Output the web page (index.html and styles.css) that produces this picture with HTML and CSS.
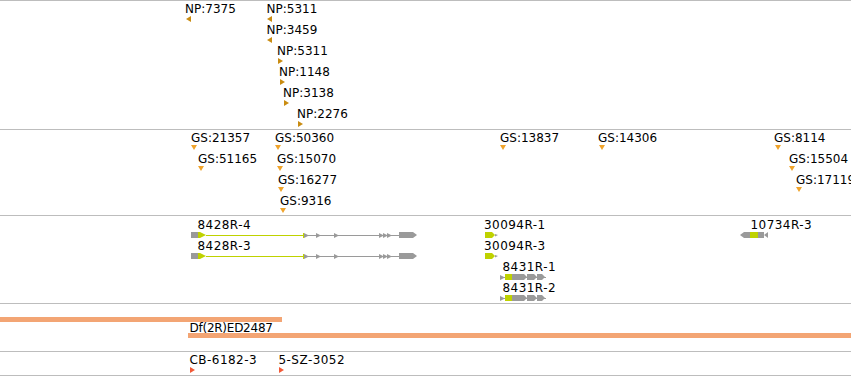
FILE: index.html
```html
<!DOCTYPE html>
<html lang="en">
<head>
  <meta charset="UTF-8">
  <title>Region tracks</title>
  <link rel="stylesheet" href="styles.css">
</head>
<body>
  <div class="tracks">

    <!-- NP peptide hits -->
    <div class="track t-np">
      <span class="lbl" style="left:185px;top:1px">NP:7375</span>
      <i class="tri np-l" style="left:186px;top:15px"></i>
      <span class="lbl" style="left:266.5px;top:1px">NP:5311</span>
      <i class="tri np-l" style="left:267px;top:15px"></i>
      <span class="lbl" style="left:266.5px;top:22px">NP:3459</span>
      <i class="tri np-l" style="left:267px;top:36px"></i>
      <span class="lbl" style="left:277px;top:43px">NP:5311</span>
      <i class="tri np-r" style="left:278px;top:57px"></i>
      <span class="lbl" style="left:279px;top:64px">NP:1148</span>
      <i class="tri np-r" style="left:280px;top:78px"></i>
      <span class="lbl" style="left:283px;top:85px">NP:3138</span>
      <i class="tri np-r" style="left:284px;top:99px"></i>
      <span class="lbl" style="left:297px;top:106px">NP:2276</span>
      <i class="tri np-r" style="left:298px;top:120px"></i>
    </div>

    <!-- GS insertions -->
    <div class="track t-gs">
      <span class="lbl" style="left:191px;top:1px">GS:21357</span>
      <i class="tri gs-d" style="left:191px;top:15px"></i>
      <span class="lbl" style="left:198px;top:22px">GS:51165</span>
      <i class="tri gs-d" style="left:198px;top:36px"></i>
      <span class="lbl" style="left:275px;top:1px">GS:50360</span>
      <i class="tri gs-d" style="left:275px;top:15px"></i>
      <span class="lbl" style="left:277px;top:22px">GS:15070</span>
      <i class="tri gs-d" style="left:277px;top:36px"></i>
      <span class="lbl" style="left:278px;top:43px">GS:16277</span>
      <i class="tri gs-d" style="left:278px;top:57px"></i>
      <span class="lbl" style="left:280px;top:64px">GS:9316</span>
      <i class="tri gs-d" style="left:280px;top:78px"></i>
      <span class="lbl" style="left:500px;top:1px">GS:13837</span>
      <i class="tri gs-d" style="left:500px;top:15px"></i>
      <span class="lbl" style="left:598px;top:1px">GS:14306</span>
      <i class="tri gs-d" style="left:599px;top:15px"></i>
      <span class="lbl" style="left:774px;top:1px">GS:8114</span>
      <i class="tri gs-d" style="left:775px;top:15px"></i>
      <span class="lbl" style="left:789px;top:22px">GS:15504</span>
      <i class="tri gs-d" style="left:789px;top:36px"></i>
      <span class="lbl" style="left:796px;top:43px">GS:17119</span>
      <i class="tri gs-d" style="left:796px;top:57px"></i>
    </div>

    <!-- transcripts -->
    <div class="track t-gene">
      <span class="lbl" style="left:197.5px;top:2px">8428R-4</span>
      <svg class="glyph" style="left:191px;top:16px" width="227" height="6" viewBox="0 0 227 6">
        <rect class="utr" x="0" y="0" width="7" height="6"/>
        <polygon class="cds" points="7,0 9,0 15,3 9,6 7,6"/>
        <rect class="cds" x="15" y="3" width="97" height="1"/>
        <rect class="cds" x="112" y="1" width="1" height="5"/>
        <rect class="utr" x="113" y="3" width="95" height="1"/>
        <polygon class="utr" points="113,1 118,3.5 113,6"/>
        <polygon class="utr" points="125,1 130,3.5 125,6"/>
        <polygon class="utr" points="143,1 148,3.5 143,6"/>
        <polygon class="utr" points="188,1 193,3.5 188,6"/>
        <polygon class="utr" points="192,1 197,3.5 192,6"/>
        <polygon class="utr" points="196,1 201,3.5 196,6"/>
        <polygon class="utr" points="208,0 222,0 226,3 222,6 208,6"/>
      </svg>
      <span class="lbl" style="left:197.5px;top:23px">8428R-3</span>
      <svg class="glyph" style="left:191px;top:37px" width="227" height="6" viewBox="0 0 227 6">
        <rect class="utr" x="0" y="0" width="7" height="6"/>
        <polygon class="cds" points="7,0 9,0 15,3 9,6 7,6"/>
        <rect class="cds" x="15" y="3" width="97" height="1"/>
        <rect class="cds" x="112" y="1" width="1" height="5"/>
        <rect class="utr" x="113" y="3" width="95" height="1"/>
        <polygon class="utr" points="113,1 118,3.5 113,6"/>
        <polygon class="utr" points="125,1 130,3.5 125,6"/>
        <polygon class="utr" points="143,1 148,3.5 143,6"/>
        <polygon class="utr" points="188,1 193,3.5 188,6"/>
        <polygon class="utr" points="192,1 197,3.5 192,6"/>
        <polygon class="utr" points="196,1 201,3.5 196,6"/>
        <polygon class="utr" points="208,0 222,0 226,3 222,6 208,6"/>
      </svg>

      <span class="lbl" style="left:484px;top:2px">30094R-1</span>
      <svg class="glyph" style="left:485px;top:16px" width="14" height="6" viewBox="0 0 14 6">
        <polygon class="cds" points="0,0 7,0 10,3 7,6 0,6"/>
        <polygon class="utr" points="10,2 13,3 10,4.5"/>
      </svg>
      <span class="lbl" style="left:484px;top:23px">30094R-3</span>
      <svg class="glyph" style="left:485px;top:37px" width="14" height="6" viewBox="0 0 14 6">
        <polygon class="cds" points="0,0 7,0 10,3 7,6 0,6"/>
        <polygon class="utr" points="10,2 13,3 10,4.5"/>
      </svg>

      <span class="lbl" style="left:502.5px;top:44px">8431R-1</span>
      <svg class="glyph" style="left:500px;top:58px" width="46" height="6" viewBox="0 0 46 6">
        <rect class="utr" x="0" y="3" width="46" height="1"/>
        <polygon class="utr" points="0,1 5,3.5 0,6"/>
        <rect class="cds" x="5" y="0" width="7" height="6"/>
        <polygon class="utr" points="12,0 24,0 27,3 24,6 12,6"/>
        <polygon class="utr" points="27,0 34,0 37,3 34,6 27,6"/>
        <polygon class="utr" points="37,0 42,0 45,3 42,6 37,6"/>
      </svg>
      <span class="lbl" style="left:502.5px;top:65px">8431R-2</span>
      <svg class="glyph" style="left:500px;top:79px" width="46" height="6" viewBox="0 0 46 6">
        <rect class="utr" x="0" y="3" width="46" height="1"/>
        <polygon class="utr" points="0,1 5,3.5 0,6"/>
        <rect class="cds" x="5" y="0" width="7" height="6"/>
        <polygon class="utr" points="12,0 24,0 27,3 24,6 12,6"/>
        <polygon class="utr" points="27,0 34,0 37,3 34,6 27,6"/>
        <polygon class="utr" points="37,0 42,0 45,3 42,6 37,6"/>
      </svg>

      <span class="lbl" style="left:750.5px;top:2px">10734R-3</span>
      <svg class="glyph" style="left:740px;top:16px" width="28" height="6" viewBox="0 0 28 6">
        <polygon class="utr" points="0,3 4,0 10,0 10,6 4,6"/>
        <rect class="cds" x="10" y="0" width="8" height="6"/>
        <rect class="utr" x="18" y="0" width="6" height="6"/>
        <polygon class="utr" points="24,3 28,0 28,6"/>
      </svg>
    </div>

    <!-- deficiencies -->
    <div class="track t-df">
      <div class="bar" style="left:0;width:282px;top:13px"></div>
      <span class="lbl" style="left:189.5px;top:17px">Df(2R)ED2487</span>
      <div class="bar" style="left:188px;width:663px;top:29px"></div>
    </div>

    <!-- markers -->
    <div class="track t-mk">
      <span class="lbl" style="left:189.5px;top:1px">CB-6182-3</span>
      <i class="tri mk-r" style="left:190px;top:15px"></i>
      <span class="lbl" style="left:278.5px;top:1px">5-SZ-3052</span>
      <i class="tri mk-r" style="left:279px;top:15px"></i>
    </div>

  </div>
</body>
</html>
```

FILE: styles.css
```css
body {
  margin: 0;
  background: white;
  font-family: "DejaVu Sans", sans-serif;
}
.tracks {
  width: 851px;
  overflow: hidden;
}
.track {
  position: relative;
  border-top: 1px solid #bdbdbd;
  overflow: hidden;
}
.t-np {
  height: 128px;
}
.t-gs {
  height: 85px;
}
.t-gene {
  height: 87px;
}
.t-df {
  height: 47px;
}
.t-mk {
  height: 23px;
  border-bottom: 1px solid #bdbdbd;
}
.lbl {
  position: absolute;
  font-size: 12px;
  line-height: 14px;
  color: #000;
  white-space: nowrap;
}
.t-gene .lbl,
.t-mk .lbl {
  letter-spacing: 0.45px;
}
.t-df .lbl {
  letter-spacing: -0.25px;
}
.glyph {
  position: absolute;
  display: block;
}
.utr {
  fill: #9a9a9a;
}
.cds {
  fill: #bfd200;
}
.tri {
  position: absolute;
  width: 0;
  height: 0;
}
.np-l {
  border-top: 3px solid transparent;
  border-bottom: 3px solid transparent;
  border-right: 5px solid #c98c12;
}
.np-r {
  border-top: 3px solid transparent;
  border-bottom: 3px solid transparent;
  border-left: 5px solid #c98c12;
}
.gs-d {
  border-left: 3px solid transparent;
  border-right: 3px solid transparent;
  border-top: 5px solid #f0a42c;
}
.mk-r {
  border-top: 3px solid transparent;
  border-bottom: 3px solid transparent;
  border-left: 5px solid #f25a38;
}
.bar {
  position: absolute;
  height: 5px;
  background: #f3a574;
}
```
